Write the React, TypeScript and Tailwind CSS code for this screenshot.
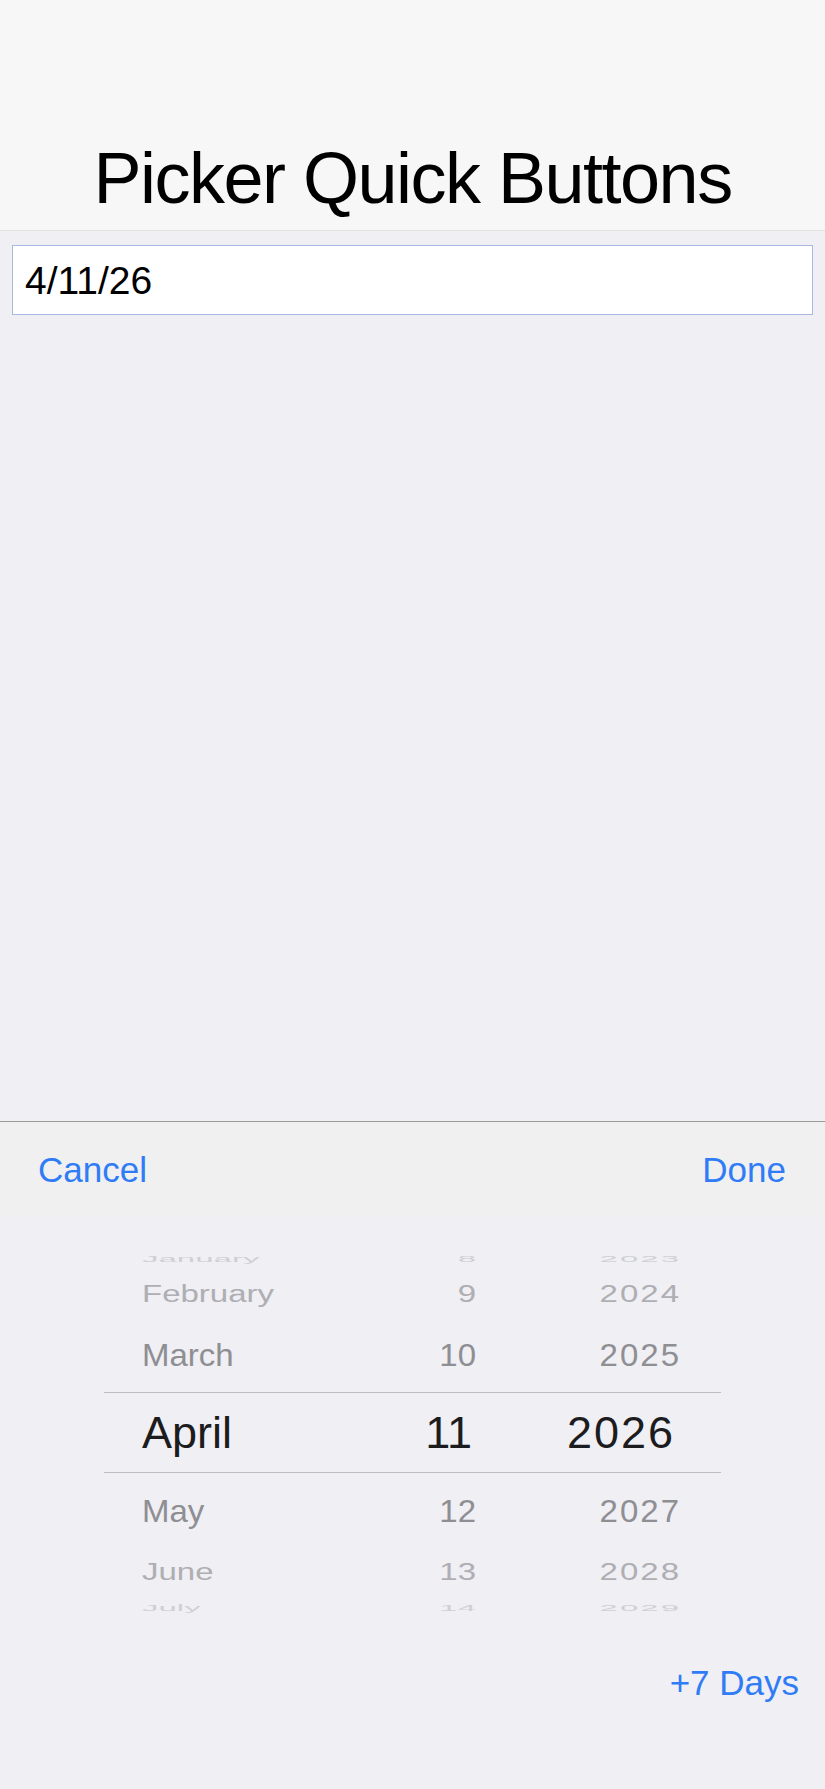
import React from "react";

const font = { fontFamily: '"Liberation Sans", Arial, sans-serif' };

type Row = {
  m: string;
  d: string;
  y: string;
  h: string;
  scale: string;
  color: string;
};

const rows: Row[] = [
  { m: "January", d: "8", y: "2023", h: "h-[36px]", scale: "scale-y-[0.3]", color: "text-[#cfcfd4]" },
  { m: "February", d: "9", y: "2024", h: "h-[34px]", scale: "scale-y-[0.7]", color: "text-[#aeaeb3]" },
  { m: "March", d: "10", y: "2025", h: "h-[82px] pt-[8px]", scale: "scale-y-[0.95]", color: "text-[#8e8e93]" },
];
const rowsAfter: Row[] = [
  { m: "May", d: "12", y: "2027", h: "h-[76px]", scale: "scale-y-[0.95]", color: "text-[#8e8e93]" },
  { m: "June", d: "13", y: "2028", h: "h-[44px]", scale: "scale-y-[0.7]", color: "text-[#aeaeb3]" },
  { m: "July", d: "14", y: "2029", h: "h-[28px]", scale: "scale-y-[0.3]", color: "text-[#cfcfd4]" },
];

function PickerRow({ r }: { r: Row }) {
  return (
    <div className={`flex items-center ${r.h} ${r.color}`}>
      <div className={`flex w-full items-center text-[33px] leading-none ${r.scale}`}>
        <div className="w-[254px] pl-[38px] box-content">{r.m}</div>
        <div className="w-[80px] text-right">{r.d}</div>
        <div className="w-[205px] text-right tracking-[2px] mr-[-2px]">{r.y}</div>
      </div>
    </div>
  );
}

export default function App() {
  return (
    <div className="flex h-[1789px] w-full flex-col bg-[#efeff4]" style={font}>
      <header className="flex h-[231px] items-end justify-center border-b border-[#e0e0e0] bg-[#f7f7f7] pb-[16px]">
        <h1 className="text-[72px] font-normal leading-none tracking-[-1.5px] text-black">
          Picker Quick Buttons
        </h1>
      </header>

      <div className="flex-1 px-[12px] pt-[14px]">
        <div className="flex h-[70px] items-center border border-[#a9b8e4] bg-white pl-[12px] text-[39px] leading-none text-black">
          4/11/26
        </div>
      </div>

      <div className="h-[668px] border-t border-[#9a9a9a]">
        <div className="flex h-[95px] items-center justify-between bg-[#f0f0f0] pl-[38px] pr-[39px] text-[35px] leading-none text-[#2f7cf6]">
          <span>Cancel</span>
          <span>Done</span>
        </div>

        <div className="pt-[23px]">
          <div className="ml-[104px] w-[617px] overflow-hidden">
            {rows.map((r) => (
              <PickerRow key={r.m} r={r} />
            ))}
            <div className="flex h-[81px] items-center border-y border-[#bdbdc2] text-[45px] leading-none text-[#1c1c1e]">
              <div className="w-[254px] pl-[38px] box-content">April</div>
              <div className="w-[80px] pr-[4px] text-right box-border">11</div>
              <div className="w-[205px] pr-[6px] text-right tracking-[2px] box-border">2026</div>
            </div>
            {rowsAfter.map((r) => (
              <PickerRow key={r.m} r={r} />
            ))}
          </div>
        </div>

        <div className="flex justify-end pr-[26px] pt-[44px] text-[35px] leading-none text-[#2f7cf6]">
          <span>+7 Days</span>
        </div>
      </div>
    </div>
  );
}
